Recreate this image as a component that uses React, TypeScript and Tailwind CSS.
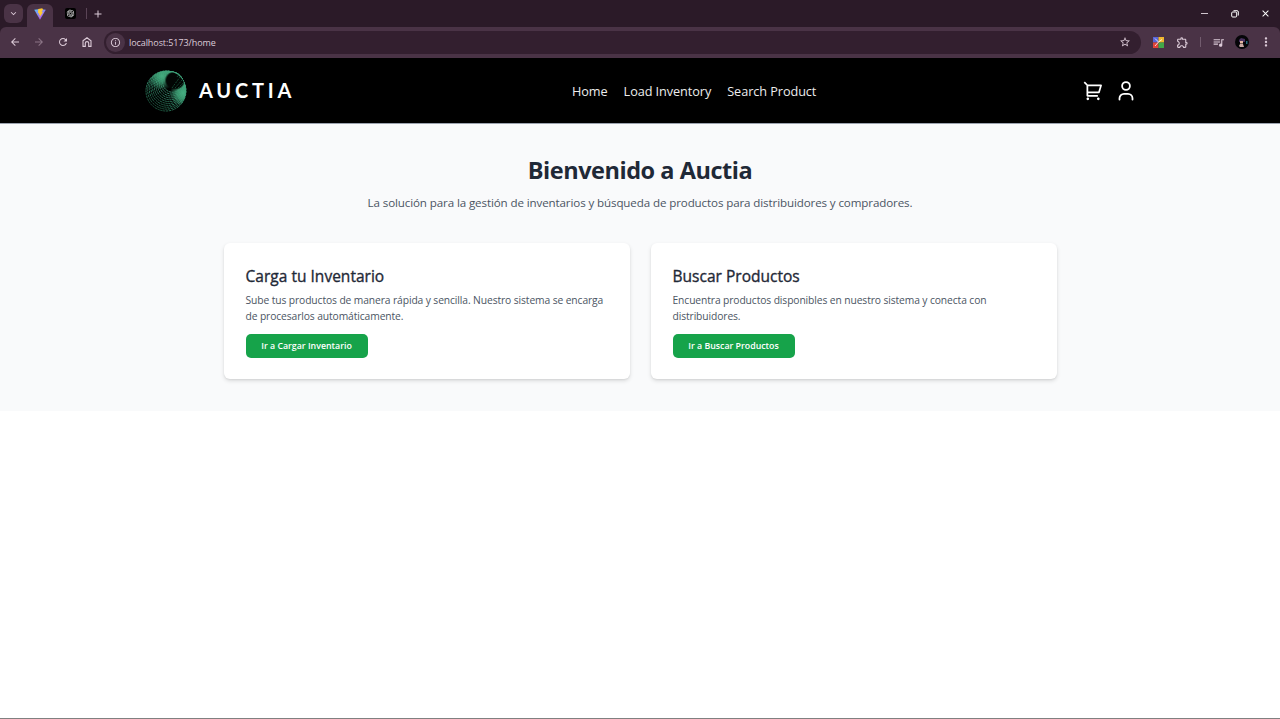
import React from "react";
import {
  MdArrowBack, MdArrowForward, MdRefresh, MdInfoOutline, MdStarBorder,
  MdOutlineExtension, MdOutlineQueueMusic, MdMoreVert, MdAdd, MdExpandMore, MdClose,
} from "react-icons/md";
import { RiShoppingCart2Line, RiOpenaiFill } from "react-icons/ri";

const rings = Array.from({ length: 11 }, (_, i) => {
  const t = i / 12;
  return { cx: 21 + 8 * t, cy: 21 - 10.5 * t, r: 20 - 12 * t };
});

function ViteLogo() {
  return (
    <svg width="12" height="12" viewBox="0 0 24 24">
      <defs>
        <linearGradient id="vp" x1="0" y1="0" x2="0.6" y2="1">
          <stop offset="0" stopColor="#5cc3f5" />
          <stop offset="1" stopColor="#b452f0" />
        </linearGradient>
      </defs>
      <path d="M0.5 3.5 12 1.8 23.5 3.5 12 23.5Z" fill="url(#vp)" />
      <path d="M16.5 0.5 8.5 2 8 10.5 10.5 10 9.8 14 12 13.4 11 19 18 8 15 8.4 18 3.2Z" fill="#ffc832" />
    </svg>
  );
}

function HomeIcon() {
  return (
    <svg width="12" height="12" viewBox="0 0 12 12" fill="none" stroke="currentColor" strokeWidth="1.1" className="ml-[12px]">
      <path d="M2 4.8 6 1.7l4 3.1v5.6H7.700V7.300a1.700 1.700 0 0 0-3.400 0v3.100H2Z" />
    </svg>
  );
}

function GlobeLogo() {
  return (
    <svg width="42" height="42" viewBox="0 0 42 42" fill="none">
      <defs>
        <linearGradient id="lit" gradientUnits="userSpaceOnUse" x1="34" y1="6" x2="8" y2="40">
          <stop offset="0" stopColor="#3da279" />
          <stop offset="0.5" stopColor="#34896a" />
          <stop offset="1" stopColor="#164a34" />
        </linearGradient>
        <radialGradient id="glowTop" gradientUnits="userSpaceOnUse" cx="17" cy="6" r="14">
          <stop offset="0" stopColor="#45ad80" />
          <stop offset="0.4" stopColor="#3fa378" stopOpacity="0.8" />
          <stop offset="1" stopColor="#3fa87b" stopOpacity="0" />
        </radialGradient>
        <radialGradient id="glowRight" gradientUnits="userSpaceOnUse" cx="38" cy="23" r="13">
          <stop offset="0" stopColor="#45ad80" />
          <stop offset="0.45" stopColor="#3fa378" stopOpacity="0.85" />
          <stop offset="1" stopColor="#3fa87b" stopOpacity="0" />
        </radialGradient>
        <radialGradient id="hole">
          <stop offset="0" stopColor="#020604" />
          <stop offset="0.8" stopColor="#020604" />
          <stop offset="1" stopColor="#020604" stopOpacity="0" />
        </radialGradient>
        <clipPath id="ball"><circle cx="21" cy="21" r="20" /></clipPath>
      </defs>
      {rings.map((c, i) => (
        <circle key={i} cx={c.cx} cy={c.cy} r={c.r} stroke="url(#lit)" strokeWidth="1" strokeDasharray="2.2 0.7" />
      ))}
      <g clipPath="url(#ball)">
        <circle cx="17" cy="6" r="14" fill="url(#glowTop)" />
        <circle cx="38" cy="23" r="13" fill="url(#glowRight)" />
        <ellipse cx="30" cy="10.500" rx="10.500" ry="9.500" fill="url(#hole)" />
        <path d="m27 18 8-11M30 18l8-9M33 18l6-6M32 7l3-4" stroke="#1f6648" strokeWidth="0.7" strokeDasharray="2 1" />
      </g>
    </svg>
  );
}

function Card({ title, body, action }: { title: string; body: React.ReactNode; action: string }) {
  return (
    <section className="h-[136px] rounded-[6px] bg-white px-[21.5px] pt-[22px] shadow-[0_2px_4px_rgba(0,0,0,0.12),0_1px_2px_rgba(0,0,0,0.06)]">
      <h2 className="text-[15.5px] leading-[22px] tracking-[0.02px] text-[#1f2937] [-webkit-text-stroke:0.35px_#1f2937]">{title}</h2>
      <p className="mt-[5px] whitespace-nowrap text-[10.3px] leading-[16px] tracking-[-0.11px] text-[#4b5563]">{body}</p>
      <button className="mt-[10px] flex h-[24px] w-[122px] items-center justify-center whitespace-nowrap rounded-[5px] bg-[#16a34a] pt-px text-[8.8px] font-semibold text-white">
        {action}
      </button>
    </section>
  );
}

export default function App() {
  return (
    <div className="flex h-[719px] w-[1280px] flex-col overflow-hidden bg-white font-['Open_Sans','Noto_Sans',sans-serif]">
      <header className="h-[58px] shrink-0 bg-[#2b1a28] text-[#dccbd8]">
        <div className="flex h-[27px] items-center pl-[4px]">
          <div className="flex h-[19px] w-[19px] items-center justify-center rounded-[6px] bg-[#4a3346]"><MdExpandMore size={11} /></div>
          <div className="ml-[4px] mt-[4px] flex h-[23px] w-[26px] items-center justify-center rounded-t-[6px] bg-[#4a3346] pb-[4px]"><ViteLogo /></div>
          <div className="ml-[12px] flex h-[11px] w-[11px] items-center justify-center rounded-[2px] bg-black text-white"><RiOpenaiFill size={9} /></div>
          <div className="ml-[10px] h-[11px] w-px bg-[#5a4456]" />
          <MdAdd size={12} className="ml-[4.5px]" />
          <div className="ml-auto flex items-center pr-[9px] text-white">
            <div className="h-px w-[7px] bg-[#cfc5cd]" />
            <svg width="8" height="8" viewBox="0 0 8 8" fill="none" stroke="currentColor" className="ml-[23px]"><rect x="0.7" y="2" width="5" height="5" rx="1" /><path d="M2.5.7H6A1.3 1.3 0 0 1 7.3 2V5.5" /></svg>
            <MdClose size={11} className="ml-[21px]" />
          </div>
        </div>
        <div className="flex h-[31px] items-center rounded-t-[6px] bg-[#4a3346] pb-px pl-[9px]">
          <MdArrowBack size={12} />
          <MdArrowForward size={12} className="ml-[12px] text-[#8b7586]" />
          <MdRefresh size={12} className="ml-[12px]" />
          <HomeIcon />
          <div className="ml-[11px] flex h-[23px] w-[1037px] items-center rounded-full bg-[#331f2f] pl-[2px] pr-[10px]">
            <div className="flex h-[19px] w-[19px] items-center justify-center rounded-full bg-[#4a3346]"><MdInfoOutline size={11} /></div>
            <span className="ml-[4px] text-[9px] leading-none tracking-[-0.08px]">localhost:5173/home</span>
            <MdStarBorder size={12} className="ml-auto" />
          </div>
          <svg width="11" height="11" viewBox="0 0 11 11" className="ml-[12px]"><path d="M0 0h5.5v5.5H0z" fill="#5865d8" /><path d="M5.500 0H11v5.500H5.500z" fill="#f0b72f" /><path d="M0 5.500h5.500V11H0z" fill="#e04438" /><path d="M5.500 5.500H11V11H5.500z" fill="#42a848" /><path d="m2 1.500 3.500 3.500L9 2.500M2 9l3.500-4" stroke="#fff" strokeOpacity="0.8" fill="none" /></svg>
          <MdOutlineExtension size={13} className="ml-[12px]" />
          <div className="ml-[11px] h-[10px] w-px bg-[#725c6e]" />
          <MdOutlineQueueMusic size={13} className="ml-[11px]" />
          <svg width="14" height="14" viewBox="0 0 14 14" className="ml-[10px]"><circle cx="7" cy="7" r="7" fill="#050508" /><path d="M4 5 6 3l4 1v3H4z" fill="#49305f" /><path d="M5 6h3v2.500H5z" fill="#e4b6a0" /><path d="m4 11 1-2h3l1 3H5z" fill="#c9a9a4" /><path d="M11 6h1.500v3H11z" fill="#246878" /></svg>
          <MdMoreVert size={14} className="ml-[10px]" />
        </div>
      </header>
      <nav className="flex h-[66px] shrink-0 items-center border-b border-[#9ca3af] bg-black pl-[145px] text-white">
        <GlobeLogo />
        <span className="ml-[12px] w-[99px] whitespace-nowrap pb-px font-['Lato',sans-serif] text-[20px] font-bold leading-none tracking-[3.8px]">AUCTIA</span>
        <div className="ml-[274px] flex w-[246px] gap-[16px] whitespace-nowrap pt-[2px] text-[12.7px] tracking-[-0.07px] text-[#ededed]">
          <a>Home</a><a>Load Inventory</a><a>Search Product</a>
        </div>
        <RiShoppingCart2Line size={21} className="ml-[265px]" />
        <svg width="16" height="20" viewBox="0 0 16 20" fill="none" stroke="currentColor" strokeWidth="1.800" strokeLinecap="round" className="ml-[13.5px]">
          <circle cx="8" cy="5" r="3.900" />
          <path d="M1.500 18.500v-1.200a4.500 4.500 0 0 1 4.500-4.500h4a4.500 4.500 0 0 1 4.500 4.500v1.200" />
        </svg>
      </nav>
      <main className="h-[287px] shrink-0 bg-[#f9fafb]">
        <h1 className="pt-[30px] text-center text-[23.5px] font-bold leading-[32px] tracking-[-0.46px] text-[#1f2937]">Bienvenido a Auctia</h1>
        <p className="mt-[8px] text-center text-[11.6px] leading-[18px] tracking-[-0.12px] text-[#4b5563]">La solución para la gestión de inventarios y búsqueda de productos para distribuidores y compradores.</p>
        <div className="ml-[224px] mt-[31px] grid w-[833px] grid-cols-2 gap-[21px]">
          <Card title="Carga tu Inventario" action="Ir a Cargar Inventario" body={<>Sube tus productos de manera rápida y sencilla. Nuestro sistema se encarga<br />de procesarlos automáticamente.</>} />
          <Card title="Buscar Productos" action="Ir a Buscar Productos" body={<>Encuentra productos disponibles en nuestro sistema y conecta con<br />distribuidores.</>} />
        </div>
      </main>
      <div className="mt-auto h-px bg-[#808080]" />
    </div>
  );
}
